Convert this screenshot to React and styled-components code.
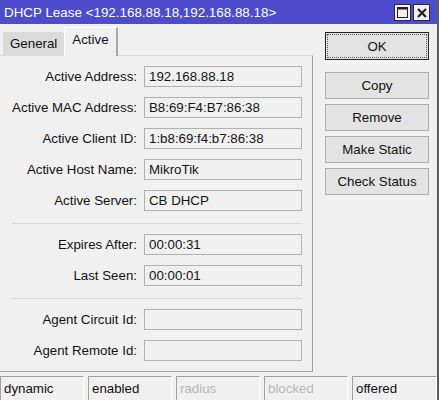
import React from 'react'
import styled, { createGlobalStyle } from 'styled-components'

const GlobalStyle = createGlobalStyle`
  html, body {
    margin: 0;
    padding: 0;
    background: #f0f0f0;
  }
  * {
    box-sizing: border-box;
  }
`;

const Window = styled.div`
  width: 439px;
  height: 400px;
  overflow: hidden;
  display: flex;
  flex-direction: column;
  background: #f0f0f0;
  border-right: 2px solid #5e5e5e;
  font-family: "Liberation Sans", Arial, sans-serif;
  font-size: 13.3px;
  color: #111;
`;

const TitleBar = styled.div`
  height: 24px;
  flex: 0 0 24px;
  display: flex;
  align-items: center;
  padding-left: 4px;
  background: #4c4ccc;
  color: #fff;
`;

const Title = styled.span`
  flex: 1;
  font-size: 13.4px;
  white-space: nowrap;
`;

const CaptionButtons = styled.div`
  display: flex;
  gap: 2px;
  padding-right: 7px;
  margin-top: 1px;
`;

const CaptionButton = styled.div`
  width: 17px;
  height: 17px;
  display: flex;
  align-items: center;
  justify-content: center;
  background: #f0f0f0;
  border: 1px solid #2a2a2a;
`;

const Body = styled.div`
  flex: 1;
  display: flex;
`;

const LeftColumn = styled.div`
  width: 313px;
  display: flex;
  flex-direction: column;
`;

const TabStrip = styled.div`
  height: 31px;
  display: flex;
  align-items: flex-end;
  padding-left: 3px;
  position: relative;
  z-index: 1;
`;

const Tab = styled.div`
  display: flex;
  align-items: center;
  justify-content: center;
  padding: 0 7px;
  height: ${props => (props.active ? '29px' : '23px')};
  margin-bottom: ${props => (props.active ? '-1px' : '0')};
  background: ${props => (props.active ? '#f0f0f0' : '#dadada')};
  border-top: ${props => (props.active ? '1px solid #ffffff' : 'none')};
  border-left: ${props => (props.active ? '1px solid #ffffff' : 'none')};
  border-right: ${props => (props.active ? '2px solid #a8a8a8' : 'none')};
  padding-bottom: ${props => (props.active ? '6px' : '0')};
  color: #111;
`;

const Panel = styled.div`
  height: 317px;
  display: flex;
  flex-direction: column;
  padding: 10px 10px 0 0;
  border-top: 1px solid #dadada;
  border-right: 1px solid #a0a0a0;
  border-bottom: 1px solid #a0a0a0;
`;

const Section = styled.div`
  display: grid;
  grid-template-columns: 137px 158px;
  column-gap: 7px;
  row-gap: 10px;
`;

const Label = styled.div`
  height: 21px;
  display: flex;
  align-items: center;
  justify-content: flex-end;
  white-space: nowrap;
  color: #111;
`;

const Field = styled.div`
  height: 21px;
  display: flex;
  align-items: center;
  padding-left: 4px;
  border: 1px solid #b0b0b0;
  background: #f0f0f0;
  white-space: nowrap;
  color: #141414;
`;

const Separator = styled.div`
  height: 1px;
  margin: 12px 0 10px 12px;
  background: #d9d9d9;
`;

const RightColumn = styled.div`
  flex: 1;
  display: flex;
  flex-direction: column;
  padding: 8px 0 0 12px;
`;

const Button = styled.div`
  width: 104px;
  height: ${props => (props.primary ? '28px' : '27px')};
  margin-bottom: ${props => (props.primary ? '12px' : '5px')};
  display: flex;
  align-items: center;
  justify-content: center;
  background: #e3e3e3;
  border: 1px solid ${props => (props.primary ? '#222' : '#adadad')};
  outline: ${props => (props.primary ? '1px dotted #555' : 'none')};
  outline-offset: -3px;
  color: #111;
  white-space: nowrap;
`;

const StatusBar = styled.div`
  height: 28px;
  display: flex;
  gap: 4px;
  padding-top: 4px;
`;

const StatusCell = styled.div`
  width: ${props => (props.grow ? 'auto' : '84px')};
  flex: ${props => (props.grow ? '1' : '0 0 84px')};
  height: 26px;
  display: flex;
  align-items: flex-start;
  padding: 4px 0 0 3px;
  border-top: 1px solid #a0a0a0;
  border-left: 1px solid #a0a0a0;
  border-right: 1px solid #ffffff;
  color: ${props => (props.disabled ? '#b8b8b8' : '#111')};
  white-space: nowrap;
`;

const sections = [
  [
    ['Active Address:', '192.168.88.18'],
    ['Active MAC Address:', 'B8:69:F4:B7:86:38'],
    ['Active Client ID:', '1:b8:69:f4:b7:86:38'],
    ['Active Host Name:', 'MikroTik'],
    ['Active Server:', 'CB DHCP'],
  ],
  [
    ['Expires After:', '00:00:31'],
    ['Last Seen:', '00:00:01'],
  ],
  [
    ['Agent Circuit Id:', ''],
    ['Agent Remote Id:', ''],
  ],
];

const statuses = [
  { text: 'dynamic' },
  { text: 'enabled' },
  { text: 'radius', disabled: true },
  { text: 'blocked', disabled: true },
  { text: 'offered', grow: true },
];

const App = () => {
  return (
    <Window>
      <GlobalStyle />
      <TitleBar>
        <Title>DHCP Lease &lt;192.168.88.18,192.168.88.18&gt;</Title>
        <CaptionButtons>
          <CaptionButton>
            <svg width="11" height="11" viewBox="0 0 11 11">
              <rect x="0.5" y="0.5" width="10" height="10" fill="none" stroke="#222" />
              <rect x="0.5" y="0.5" width="10" height="2" fill="#222" />
            </svg>
          </CaptionButton>
          <CaptionButton>
            <svg width="10" height="10" viewBox="0 0 10 10">
              <path d="M1 1 L9 9 M9 1 L1 9" stroke="#222" strokeWidth="2.2" />
            </svg>
          </CaptionButton>
        </CaptionButtons>
      </TitleBar>
      <Body>
        <LeftColumn>
          <TabStrip>
            <Tab>General</Tab>
            <Tab active>Active</Tab>
          </TabStrip>
          <Panel>
            {sections.map((rows, i) => (
              <React.Fragment key={i}>
                {i > 0 && <Separator />}
                <Section>
                  {rows.map(([label, value]) => (
                    <React.Fragment key={label}>
                      <Label>{label}</Label>
                      <Field>{value}</Field>
                    </React.Fragment>
                  ))}
                </Section>
              </React.Fragment>
            ))}
          </Panel>
        </LeftColumn>
        <RightColumn>
          <Button primary>OK</Button>
          <Button>Copy</Button>
          <Button>Remove</Button>
          <Button>Make Static</Button>
          <Button>Check Status</Button>
        </RightColumn>
      </Body>
      <StatusBar>
        {statuses.map(s => (
          <StatusCell key={s.text} disabled={s.disabled} grow={s.grow}>
            {s.text}
          </StatusCell>
        ))}
      </StatusBar>
    </Window>
  );
};

export default App;
